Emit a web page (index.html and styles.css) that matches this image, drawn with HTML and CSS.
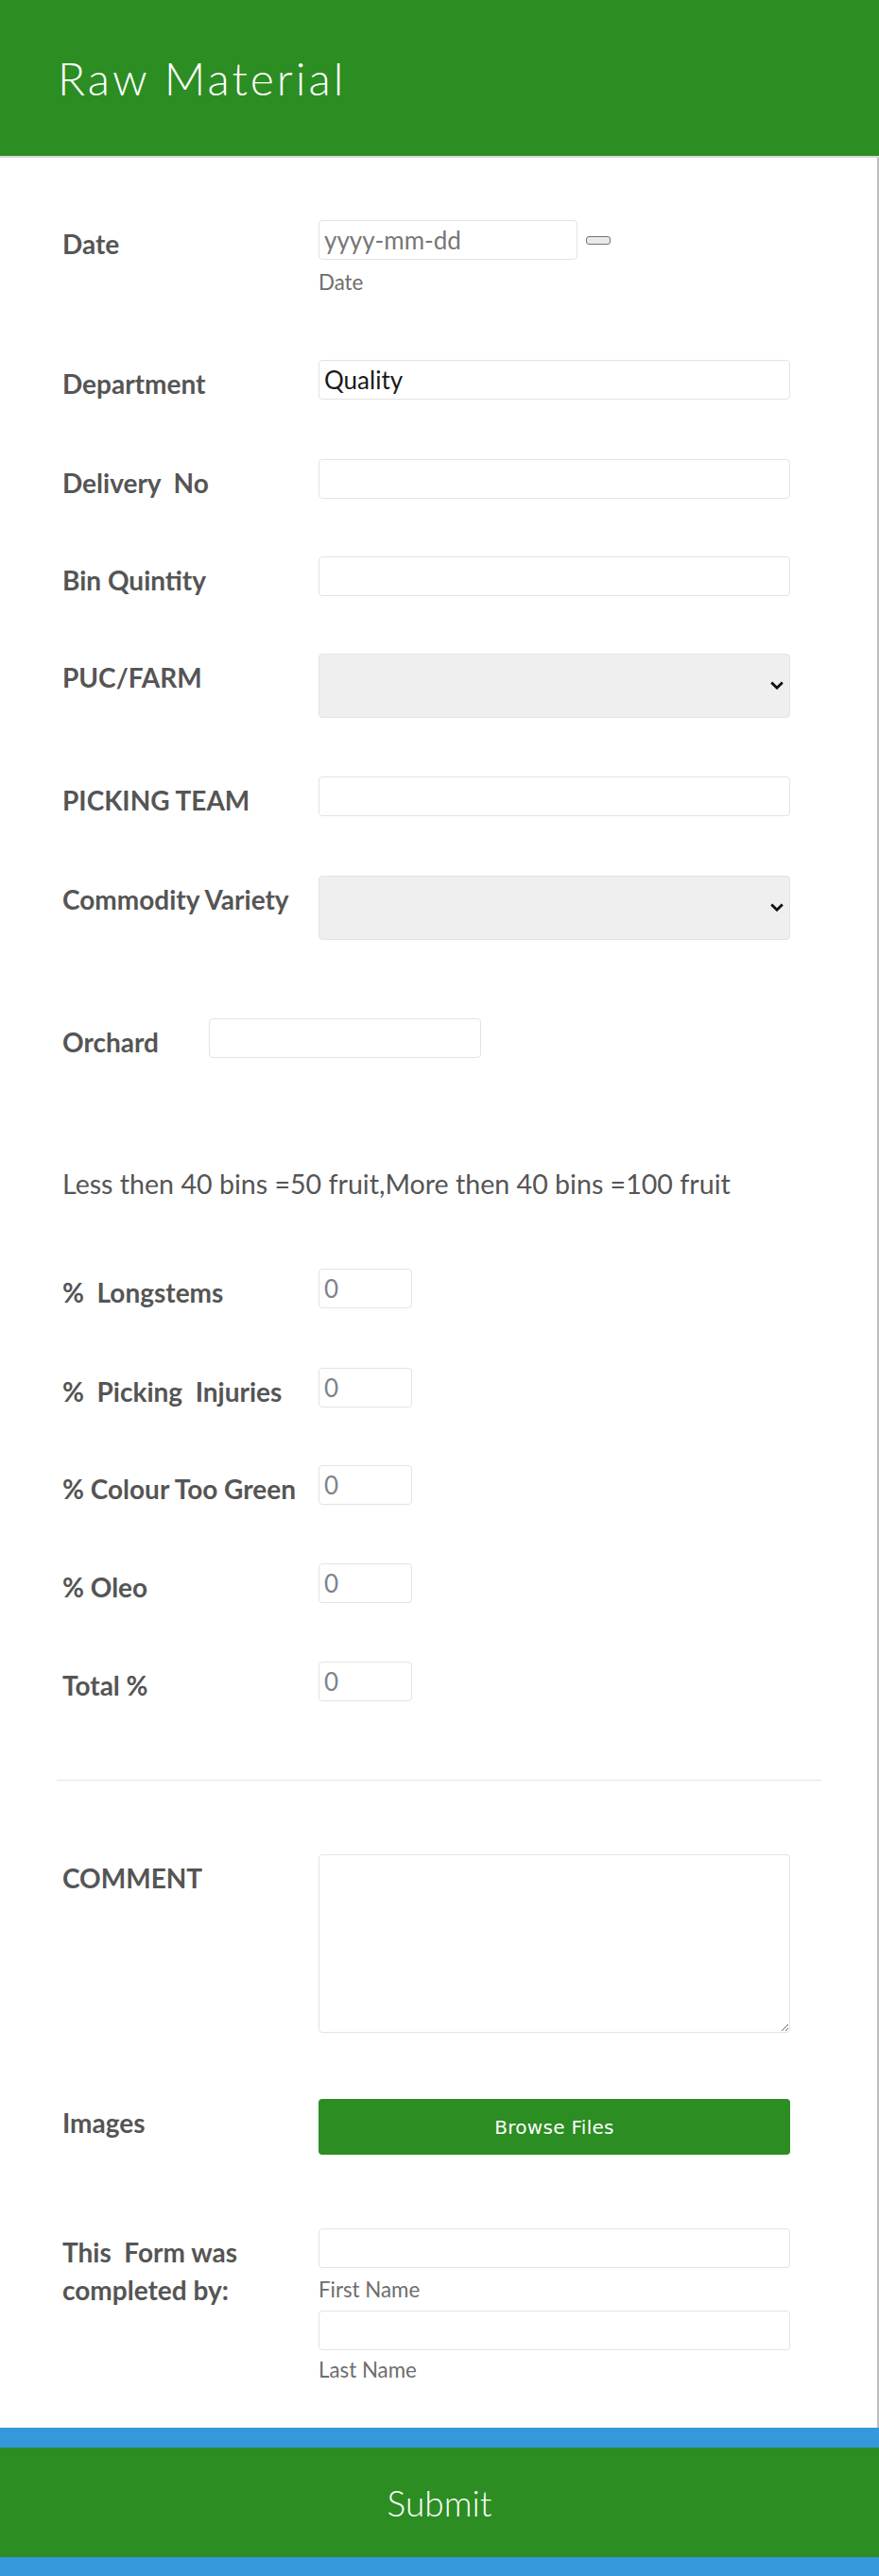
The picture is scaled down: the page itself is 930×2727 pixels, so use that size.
FILE: index.html
```html
<!DOCTYPE html>
<html lang="en">
<head>
<meta charset="utf-8">
<title>Raw Material</title>
<link rel="stylesheet" href="styles.css">
</head>
<body>
<header class="header">
  <h1 class="title">Raw Material</h1>
</header>
<main class="form">
  <div class="field field-date">
    <label class="label">Date</label>
    <div class="control">
      <div class="date-line">
        <input class="input input-date" type="text" placeholder="yyyy-mm-dd">
        <button class="date-btn" type="button"></button>
      </div>
      <span class="sublabel sub-date">Date</span>
    </div>
  </div>
  <div class="field f-dept">
    <label class="label">Department</label>
    <div class="control"><input class="input" type="text" value="Quality"></div>
  </div>
  <div class="field f-delivery">
    <label class="label">Delivery&nbsp; No</label>
    <div class="control"><input class="input" type="text"></div>
  </div>
  <div class="field f-bin">
    <label class="label">Bin Quintity</label>
    <div class="control"><input class="input" type="text"></div>
  </div>
  <div class="field f-puc">
    <label class="label">PUC/FARM</label>
    <div class="control">
      <div class="select-wrap">
        <select class="select"><option></option></select>
        <svg class="chevron" width="14" height="9" viewBox="0 0 14 9"><path d="M1.2 1.4 L7 7.2 L12.8 1.4" fill="none" stroke="#111" stroke-width="2.8"/></svg>
      </div>
    </div>
  </div>
  <div class="field f-team">
    <label class="label">PICKING TEAM</label>
    <div class="control"><input class="input" type="text"></div>
  </div>
  <div class="field f-commodity">
    <label class="label">Commodity Variety</label>
    <div class="control">
      <div class="select-wrap">
        <select class="select"><option></option></select>
        <svg class="chevron" width="14" height="9" viewBox="0 0 14 9"><path d="M1.2 1.4 L7 7.2 L12.8 1.4" fill="none" stroke="#111" stroke-width="2.8"/></svg>
      </div>
    </div>
  </div>
  <div class="field f-orchard">
    <label class="label label-orchard">Orchard</label>
    <div class="control"><input class="input input-orchard" type="text"></div>
  </div>
  <p class="note">Less then 40 bins =50 fruit,More then 40 bins =100 fruit</p>
  <div class="field f-long">
    <label class="label">%&nbsp; Longstems</label>
    <div class="control"><input class="input input-num" type="text" placeholder="0"></div>
  </div>
  <div class="field f-pick">
    <label class="label">%&nbsp; Picking&nbsp; Injuries</label>
    <div class="control"><input class="input input-num" type="text" placeholder="0"></div>
  </div>
  <div class="field f-colour">
    <label class="label">% Colour Too Green</label>
    <div class="control"><input class="input input-num" type="text" placeholder="0"></div>
  </div>
  <div class="field f-oleo">
    <label class="label">% Oleo</label>
    <div class="control"><input class="input input-num" type="text" placeholder="0"></div>
  </div>
  <div class="field f-total">
    <label class="label">Total %</label>
    <div class="control"><input class="input input-num" type="text" placeholder="0"></div>
  </div>
  <hr class="divider">
  <div class="field f-comment">
    <label class="label">COMMENT</label>
    <div class="control"><textarea class="textarea"></textarea></div>
  </div>
  <div class="field f-images">
    <label class="label">Images</label>
    <div class="control"><button class="browse" type="button">Browse Files</button></div>
  </div>
  <div class="field f-name">
    <label class="label label-two">This&nbsp; Form was completed by:</label>
    <div class="control">
      <input class="input" type="text">
      <span class="sublabel sub-first">First Name</span>
      <input class="input input-last" type="text">
      <span class="sublabel sub-last">Last Name</span>
    </div>
  </div>
</main>
<footer class="footer">
  <button class="submit" type="button">Submit</button>
</footer>
</body>
</html>
```
FILE: styles.css
```css
* { box-sizing: border-box; }

html, body {
  margin: 0;
  padding: 0;
}

body {
  width: 930px;
  background: #ffffff;
  font-family: "Lato", "Liberation Sans", sans-serif;
  color: #555555;
}

.header {
  height: 167px;
  background: #2c8d22;
  border-bottom: 2px solid #d6d6d6;
  display: flex;
  align-items: center;
  padding-left: 61px;
}

.title {
  margin: 0;
  font-family: "Lato", sans-serif;
  font-weight: 300;
  font-size: 48px;
  letter-spacing: 3px;
  color: #ffffff;
  line-height: 1;
}

.form {
  display: flex;
  flex-direction: column;
  padding: 66px 0 48px 0;
  border-right: 2px solid #bdbdbd;
}

.field {
  display: flex;
  align-items: flex-start;
  padding-left: 66px;
}

.label {
  flex: 0 0 271px;
  padding-top: 8px;
  font-size: 28px;
  line-height: 34px;
  font-weight: 700;
  color: #555555;
}

.label-orchard { flex-basis: 155px; }

.label-two {
  line-height: 40px;
  padding-top: 5px;
}

.control {
  display: flex;
  flex-direction: column;
  align-items: flex-start;
}

.input {
  width: 499px;
  height: 42px;
  border: 1px solid #e3e3e3;
  border-radius: 4px;
  padding: 0 5px;
  font-family: "Lato", sans-serif;
  font-size: 26px;
  color: #1a1a1a;
  background: #ffffff;
  outline: none;
}

.input::placeholder { color: #7d838c; }

.date-line {
  display: flex;
  align-items: center;
}

.input-date { width: 274px; }
.input-date::placeholder { color: #777777; }

.date-btn {
  margin-left: 9px;
  width: 26px;
  height: 9px;
  padding: 0;
  border: 1px solid #767676;
  border-radius: 3px;
  background: #e9e9e9;
}

.input-orchard { width: 288px; }
.input-num { width: 99px; }

.sublabel {
  font-size: 22.3px;
  line-height: 26px;
  color: #6d6d6d;
}

.sub-date { margin-top: 11px; }
.sub-first { margin-top: 10px; }
.input-last { margin-top: 9px; }
.sub-last { margin-top: 8px; }

.select-wrap {
  position: relative;
  width: 499px;
  height: 68px;
}

.select {
  -webkit-appearance: none;
  appearance: none;
  display: block;
  width: 499px;
  height: 68px;
  border: 1px solid #e3e3e3;
  border-radius: 4px;
  background-color: #efefef;
  font-size: 20px;
  color: #111111;
}

.chevron {
  position: absolute;
  right: 7px;
  top: 29px;
  pointer-events: none;
}

.f-dept { margin-top: 69px; }
.f-delivery { margin-top: 63px; }
.f-bin { margin-top: 61px; }
.f-puc { margin-top: 61px; }
.f-team { margin-top: 62px; }
.f-commodity { margin-top: 63px; }
.f-orchard { margin-top: 83px; }

.note {
  margin: 115px 0 0 66px;
  font-size: 28.6px;
  line-height: 36px;
  font-weight: 400;
  color: #555555;
}

.f-long { margin-top: 72px; }
.f-pick { margin-top: 63px; }
.f-colour { margin-top: 61px; }
.f-oleo { margin-top: 62px; }
.f-total { margin-top: 62px; }

.divider {
  margin: 83px 0 0 60px;
  width: 809px;
  height: 0;
  border: 0;
  border-top: 1px solid #e4e4e4;
}

.f-comment { margin-top: 78px; }

.textarea {
  width: 499px;
  height: 189px;
  border: 1px solid #e3e3e3;
  border-radius: 4px;
  font-size: 22px;
  outline: none;
}

.f-images { margin-top: 70px; }

.browse {
  width: 499px;
  height: 59px;
  border: 0;
  border-radius: 4px;
  background: #2c8d22;
  color: #ffffff;
  font-family: "DejaVu Sans", "Liberation Sans", sans-serif;
  font-size: 20px;
  letter-spacing: 0.3px;
}

.f-name { margin-top: 78px; }

.footer {
  background: #3498db;
  padding: 21px 0 20px 0;
}

.submit {
  display: block;
  width: 100%;
  height: 116px;
  border: 0;
  background: #2c8d22;
  color: #ffffff;
  font-family: "Lato", sans-serif;
  font-weight: 300;
  font-size: 37px;
}
```
